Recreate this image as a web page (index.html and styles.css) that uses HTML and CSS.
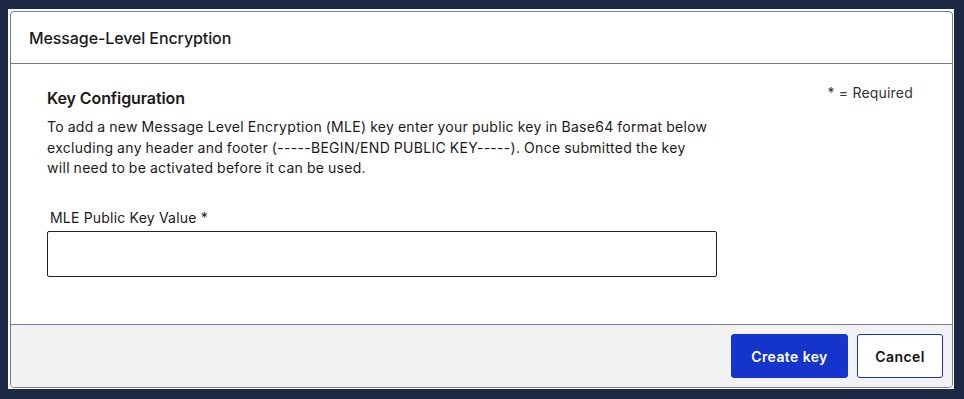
FILE: index.html
```html
<!DOCTYPE html>
<html lang="en">
<head>
    <meta charset="UTF-8">
    <meta name="viewport" content="width=device-width, initial-scale=1.0">
    <title>Message-Level Encryption</title>
    <link rel="stylesheet" href="styles.css">
</head>
<body>
    <div class="frame">
        <div class="dialog">
            <div class="dialog-header">
                <h1>Message-Level Encryption</h1>
            </div>
            <div class="dialog-body">
                <div class="form-col">
                    <h2>Key Configuration</h2>
                    <p class="intro">To add a new Message Level Encryption (MLE) key enter your public key in Base64 format below excluding any header and footer (-----BEGIN/END PUBLIC KEY-----). Once submitted the key will need to be activated before it can be used.</p>
                    <label class="field-label" for="mleKey">MLE Public Key Value *</label>
                    <input class="field-input" id="mleKey" type="text">
                </div>
                <div class="required-note">* = Required</div>
            </div>
            <div class="dialog-footer">
                <button class="btn btn-primary">Create key</button>
                <button class="btn btn-secondary">Cancel</button>
            </div>
        </div>
    </div>
</body>
</html>
```

FILE: styles.css
```css
:root {
    --frame: #1c2944;
    --border: #737d92;
    --text: #1a1a1a;
    --footer: #f2f2f2;
    --primary: #1434cb;
    --radius: 4px;
}

* {
    margin: 0;
    padding: 0;
    box-sizing: border-box;
}

html, body {
    height: 100%;
}

body {
    font-family: Inter, "Noto Sans", sans-serif;
    background: var(--frame);
    color: var(--text);
    padding: 9px 10px 10px 8px;
}

.frame {
    background: #fff;
    padding: 2px 1px 1px 2px;
    height: 100%;
}

.dialog {
    border: 1px solid var(--border);
    border-radius: var(--radius);
    height: 100%;
    display: flex;
    flex-direction: column;
    overflow: hidden;
}

.dialog-header {
    height: 52px;
    border-bottom: 1px solid var(--border);
    display: flex;
    align-items: center;
    padding: 0 18px;
}

.dialog-header h1 {
    font-size: 16px;
    font-weight: 500;
    letter-spacing: -0.1px;
}

.dialog-body {
    flex: 1;
    display: flex;
    justify-content: space-between;
    padding: 19px 39px 0 36px;
}

.form-col {
    width: 670px;
}

.form-col h2 {
    font-size: 16px;
    font-weight: 600;
    line-height: 22px;
    margin-top: 4px;
    letter-spacing: -0.1px;
}

.intro {
    font-size: 14px;
    line-height: 20.5px;
    margin-top: 8px;
    letter-spacing: 0.3px;
    word-spacing: -0.5px;
    max-width: 664.5px;
}

.field-label {
    display: block;
    font-size: 14px;
    line-height: 20px;
    margin: 29px 0 3px 3px;
    letter-spacing: 0.2px;
}

.field-input {
    display: block;
    width: 100%;
    height: 46px;
    border: 1px solid #222;
    border-radius: 2px;
    font-family: inherit;
    font-size: 14px;
    padding: 0 10px;
}

.required-note {
    font-size: 14px;
    line-height: 20px;
    color: #333;
    letter-spacing: 0.2px;
}

.dialog-footer {
    height: 63px;
    border-top: 1px solid var(--border);
    background: var(--footer);
    display: flex;
    justify-content: flex-end;
    align-items: flex-start;
    gap: 9px;
    padding: 9px 9px 0 0;
}

.btn {
    height: 44px;
    border-radius: 3px;
    font-family: inherit;
    font-size: 14px;
    font-weight: 600;
    letter-spacing: 0.4px;
    cursor: pointer;
}

.btn-primary {
    width: 117px;
    background: var(--primary);
    border: 1px solid var(--primary);
    color: #fff;
}

.btn-secondary {
    width: 86px;
    background: #fff;
    border: 1px solid var(--primary);
    color: #111;
}
```
